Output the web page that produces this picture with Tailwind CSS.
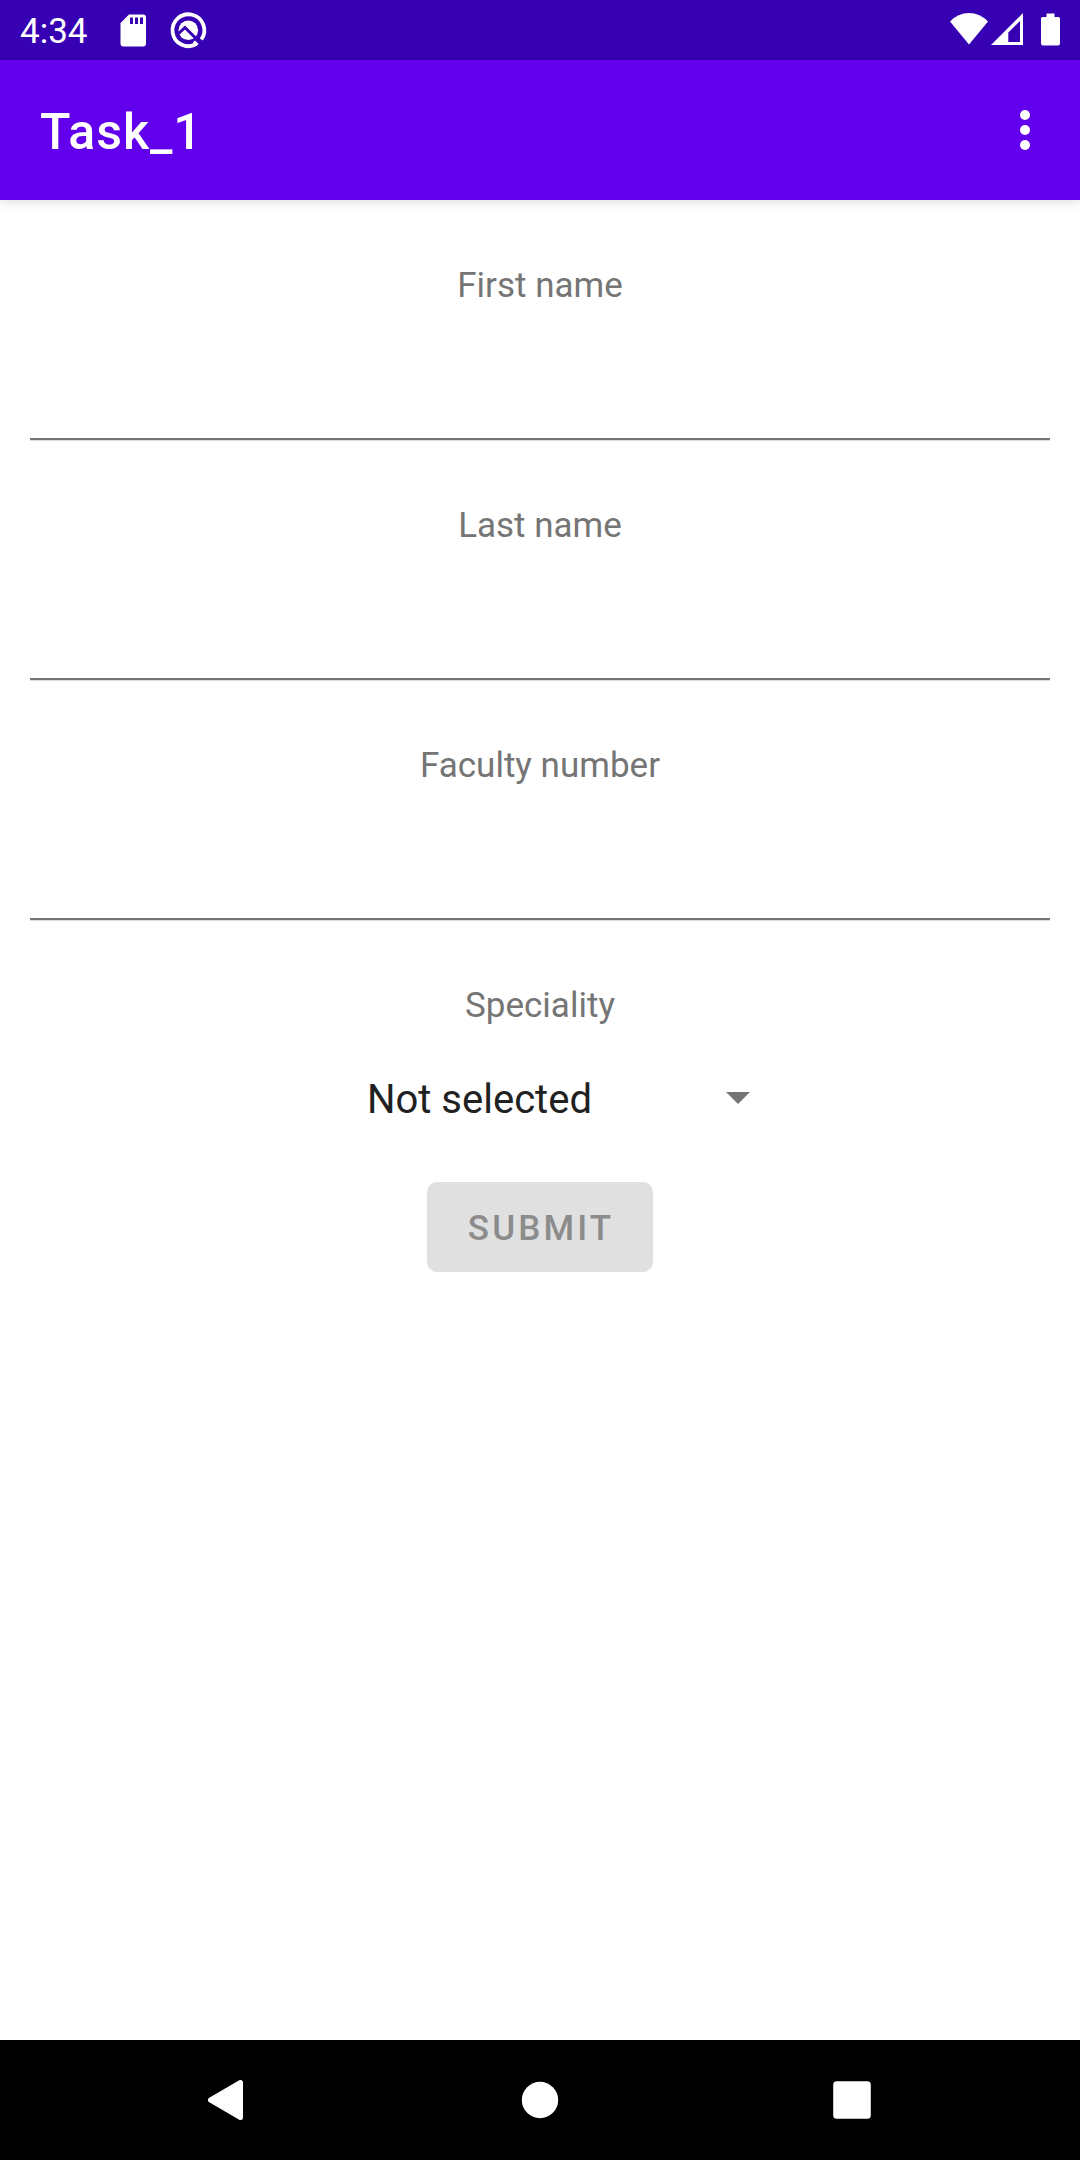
<!DOCTYPE html>
<html lang="en">
<head>
<meta charset="utf-8">
<title>Task_1</title>
<script src="https://cdn.jsdelivr.net/npm/@tailwindcss/browser@4"></script>
</head>
<body class="flex h-[2160px] w-[1080px] flex-col overflow-hidden bg-white font-['Roboto',sans-serif]">
  <div class="flex h-[60px] shrink-0 items-center justify-between bg-[#3700b3] pl-5 text-white">
    <div class="flex h-full items-center">
      <span class="w-[100px] pt-0.5 text-[35px] leading-[41px]">4:34</span>
      <svg class="h-[60px] w-[96px]" viewBox="120 0 96 60" fill="none">
        <path fill="#fff" fill-rule="evenodd" d="M129 14.500h14a3 3 0 0 1 3 3v26a3 3 0 0 1-3 3h-19.500a3 3 0 0 1-3-3V23zM130 17.500v6.500h3v-6.500zM135 17.500v6.500h3v-6.500zM140 17.500v6.500h3v-6.500z"/>
        <path stroke="#fff" stroke-width="3.800" d="M196.300 44A15.900 15.900 0 1 1 201.300 39.500"/>
        <circle cx="188.300" cy="30.200" r="9.800" fill="#fff"/>
        <path stroke="#3700b3" stroke-width="3" d="M178 34l7-6.500L199 41.500"/>
        <path stroke="#fff" stroke-width="3" d="M194 41.500l3.500 3.500"/>
      </svg>
    </div>
    <svg class="h-[60px] w-[140px]" viewBox="940 0 140 60">
      <path fill="#fff" d="M950 21.500Q958 13 969 13T988 21.500L969 44.500z"/>
      <path fill="#fff" fill-rule="evenodd" d="M991 45L1023 13V45zM1008.300 32.500V42H1020V21z"/>
      <path fill="#fff" d="M1046.500 13.500h8V17h4a1.500 1.500 0 0 1 1.500 1.500v25a2 2 0 0 1-2 2h-15a2 2 0 0 1-2-2v-25a1.500 1.500 0 0 1 1.500-1.500h4z"/>
    </svg>
  </div>
  <header class="z-10 flex h-[140px] shrink-0 items-center justify-between bg-[#6200ee] pl-10 text-white shadow-[0_3px_10px_rgba(0,0,0,0.12)]">
    <h1 class="pt-[3px] text-[50px] leading-[60px] font-medium tracking-[1px]">Task_1</h1>
    <svg class="h-[60px] w-[110px]" viewBox="970 100 110 60" fill="#fff">
      <circle cx="1025" cy="115" r="5"/><circle cx="1025" cy="130" r="5"/><circle cx="1025" cy="145" r="5"/>
    </svg>
  </header>
  <main class="flex flex-1 flex-col px-[30px] pt-[65px] text-[35px] leading-[41px] text-[#757575]">
    <label class="flex h-60 flex-col text-center">First name
      <svg class="mt-[131px] h-1 w-full" viewBox="0 0 1020 4"><path fill="#757575" d="M0 .9h1020v2.400H0z"/></svg>
    </label>
    <label class="flex h-60 flex-col text-center">Last name
      <svg class="mt-[131px] h-1 w-full" viewBox="0 0 1020 4"><path fill="#757575" d="M0 .9h1020v2.400H0z"/></svg>
    </label>
    <label class="flex h-60 flex-col text-center">Faculty number
      <svg class="mt-[131px] h-1 w-full" viewBox="0 0 1020 4"><path fill="#757575" d="M0 .9h1020v2.400H0z"/></svg>
    </label>
    <div class="text-center">Speciality</div>
    <div class="mt-[50px] ml-[337px] flex h-[47px] w-[383px] justify-between text-[40px] leading-[47px] text-[#212121]">
      <span>Not selected</span>
      <svg class="mt-4 h-3 w-6" viewBox="0 0 24 12"><path fill="#757575" d="M0 0h24L12 12z"/></svg>
    </div>
    <button class="mt-[59px] h-[90px] w-[226px] self-center rounded-[10px] bg-[#e0e0e0] pt-0.5 pl-0.5 text-[35px] font-medium tracking-[0.0893em] text-[#8c8c8c]">SUBMIT</button>
  </main>
  <nav class="h-[120px] shrink-0 bg-black">
    <svg class="h-[120px] w-[1080px]" viewBox="0 2040 1080 120" fill="#fff">
      <path stroke="#fff" stroke-width="5" stroke-linejoin="round" d="M210.500 2100L240.500 2082.500V2117.500z"/>
      <circle cx="540" cy="2100" r="18.200"/>
      <rect x="833.200" y="2081.200" width="37.600" height="37.600" rx="3.500"/>
    </svg>
  </nav>
</body>
</html>
